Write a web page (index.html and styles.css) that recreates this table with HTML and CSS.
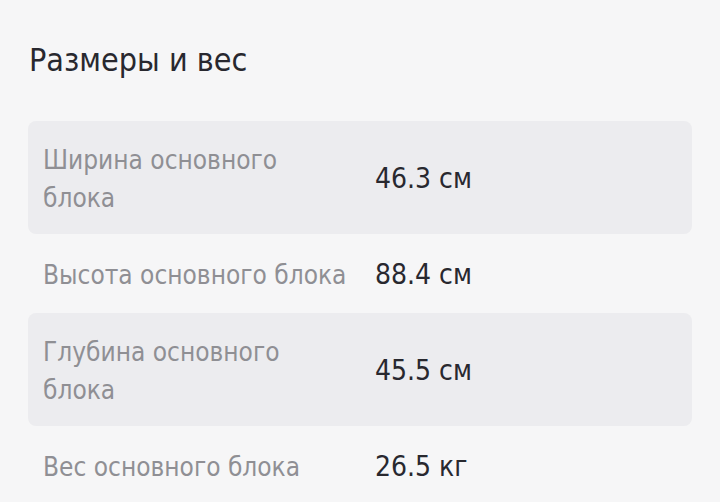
FILE: index.html
```html
<!DOCTYPE html>
<html lang="ru">
<head>
<meta charset="utf-8">
<link rel="stylesheet" href="styles.css">
</head>
<body>
<section class="specs">
  <h2 class="title">Размеры и вес</h2>
  <div class="table">
    <div class="row shaded"><div class="label">Ширина основного блока</div><div class="value">46.3 см</div></div>
    <div class="row"><div class="label">Высота основного блока</div><div class="value">88.4 см</div></div>
    <div class="row shaded"><div class="label">Глубина основного блока</div><div class="value">45.5 см</div></div>
    <div class="row"><div class="label">Вес основного блока</div><div class="value">26.5 кг</div></div>
  </div>
</section>
</body>
</html>
```
FILE: styles.css
```css
html, body {
  margin: 0;
  padding: 0;
  background: #f6f6f7;
}
body {
  font-family: "DejaVu Sans Condensed", "DejaVu Sans", sans-serif;
  color: #28282f;
}
.specs {
  padding: 38px 28px 0 28px;
}
.title {
  margin: 0 0 0 1px;
  font-weight: normal;
  font-size: 32px;
  line-height: 44px;
  color: #28282f;
}
.table {
  margin-top: 39px;
  display: flex;
  flex-direction: column;
}
.row {
  display: grid;
  grid-template-columns: 332px 1fr;
  align-items: center;
  padding: 20px 15px 17px;
  border-radius: 8px;
}
.row.shaded {
  background: #ececef;
}
.label {
  color: #8f8f94;
  padding-right: 20px;
  font-size: 26px;
  line-height: 38px;
}
.value {
  color: #28282f;
  font-size: 28px;
  line-height: 42px;
}
```
